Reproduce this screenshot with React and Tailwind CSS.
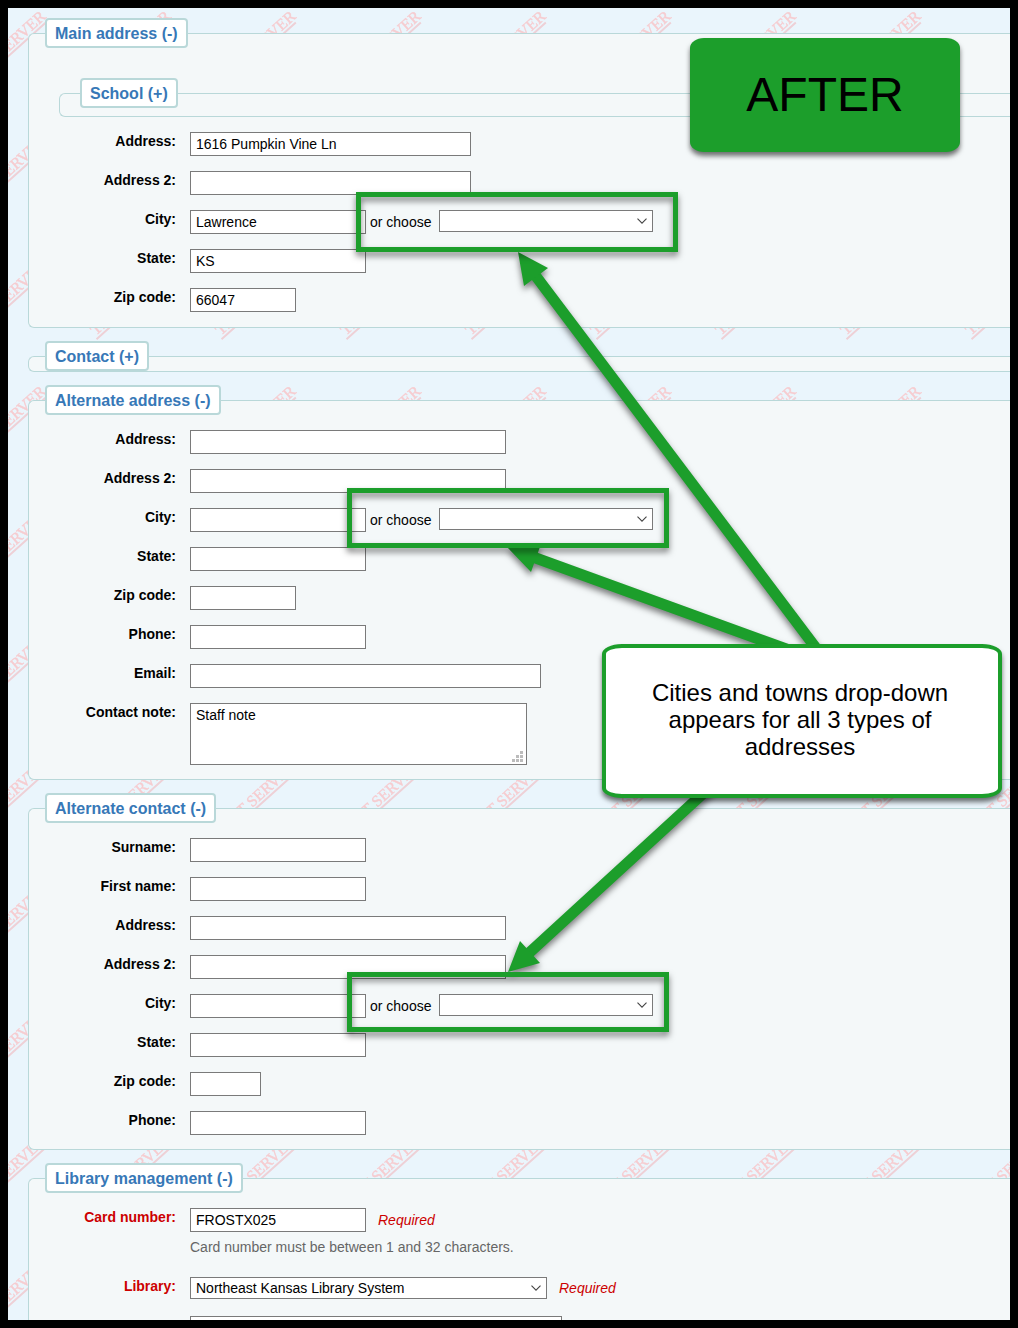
import React from "react";

function Watermark() {
  return (
    <svg aria-hidden="true" className="pointer-events-none absolute inset-0 h-full w-full">
      <defs>
        <pattern id="watermark" x="52" y="-8" width="125" height="125" patternUnits="userSpaceOnUse">
          <g transform="translate(38 88) rotate(-42)">
            <text
              x="0"
              y="-3"
              fontSize="16"
              fill="#f6ccd0"
              stroke="#f6ccd0"
              strokeWidth="0.4"
              style={{ fontFamily: '"Liberation Serif", serif' }}
            >
              TEST SERVER
            </text>
            <path d="M-2 0H98" stroke="#eed0d6" strokeWidth="2" />
          </g>
        </pattern>
      </defs>
      <rect width="100%" height="100%" fill="url(#watermark)" />
    </svg>
  );
}

function Section({ title, className = "", children }) {
  return (
    <fieldset className={"min-w-0 rounded-l-md border border-r-0 border-[#b9d8d9] bg-[#f4f8f9] " + className}>
      <legend className="rounded border-2 border-[#b9d8d9] bg-white">
        <button type="button" className="block h-[26px] px-2 text-base leading-7 font-bold text-[#3778b7]">
          {title}
        </button>
      </legend>
      {children}
    </fieldset>
  );
}

function Row({ id, label, required = false, last = false, children }) {
  return (
    <div className={"flex min-h-6 items-start gap-3.5 " + (last ? "" : "mb-[15px]")}>
      <label
        htmlFor={id}
        className={"w-[131px] shrink-0 text-right leading-[18px] font-bold " + (required ? "text-[#cc0000]" : "text-black")}
      >
        {label}
      </label>
      <div className="min-w-0 flex-1">{children}</div>
    </div>
  );
}

function TextBox({ id, width, value = "" }) {
  return (
    <input
      id={id}
      type="text"
      defaultValue={value}
      className={"block h-6 shrink-0 border border-[#7a7a7a] bg-white px-[5px] text-black " + width}
    />
  );
}

function Dropdown({ id, width, label, options }) {
  return (
    <div className={"relative shrink-0 " + width}>
      <select
        id={id}
        aria-label={label}
        className="block h-[22px] w-full appearance-none border border-[#7a7a7a] bg-white pr-6 pl-[5px] text-black"
      >
        {options.map((o) => (
          <option key={o}>{o}</option>
        ))}
      </select>
      <svg
        aria-hidden="true"
        viewBox="0 0 10 6"
        className="pointer-events-none absolute top-2 right-1.5 h-1.5 w-2.5"
        fill="none"
        stroke="#444"
        strokeWidth="1.1"
      >
        <path d="M0.5 0.7 5 5.2 9.5 0.7" />
      </svg>
    </div>
  );
}

function CityRow({ id, value }) {
  return (
    <Row id={id} label="City:">
      <div className="flex items-start gap-1">
        <TextBox id={id} width="w-44" value={value} />
        <span className="w-[65px] shrink-0 leading-6">or choose</span>
        <Dropdown id={id + "-choice"} width="w-[214px]" label="or choose a city" options={[""]} />
      </div>
    </Row>
  );
}

function FieldRow({ id, label, width, value, last }) {
  return (
    <Row id={id} label={label} last={last}>
      <TextBox id={id} width={width} value={value} />
    </Row>
  );
}

function Highlight({ className }) {
  return (
    <div
      className={
        "absolute h-[60px] w-[322px] border-[5px] border-[#1c9e2b] drop-shadow-[0_4px_3px_rgba(0,0,0,0.5)] " + className
      }
    />
  );
}

function Annotations() {
  return (
    <div className="pointer-events-none absolute top-0 left-0">
      <svg
        aria-hidden="true"
        width="1002"
        height="1312"
        viewBox="8 8 1002 1312"
        className="absolute top-0 left-0 max-w-none drop-shadow-[0_4px_3px_rgba(0,0,0,0.5)]"
        fill="#1c9e2b"
        stroke="none"
      >
        <path d="M535 275 825 660M533 557 800 654M529 953 720 778" stroke="#1c9e2b" strokeWidth="11" />
        <path d="M518 252 548 268 524 286ZM507 547 541 544 531 572ZM508 972 520 941 540 963Z" />
      </svg>
      <Highlight className="top-[184px] left-[348px]" />
      <Highlight className="top-[480px] left-[339px]" />
      <Highlight className="top-[964px] left-[339px]" />
      <div className="absolute top-[30px] left-[682px] flex h-[114px] w-[270px] items-center justify-center rounded-[14px/10px] bg-[#1c9e2b] text-5xl text-black shadow-[0_4px_5px_rgba(0,0,0,0.55)]">
        AFTER
      </div>
      <div className="absolute top-[636px] left-[594px] flex h-[154px] w-[400px] items-center justify-center rounded-[20px/10px] border-4 border-[#1c9e2b] bg-white pr-10 pb-1 pl-9 text-center text-2xl leading-[27px] text-black shadow-[0_4px_5px_rgba(0,0,0,0.55)]">
        Cities and towns drop-down appears for all 3 types of addresses
      </div>
    </div>
  );
}

export default function App() {
  return (
    <div className="relative h-screen overflow-hidden border-8 border-black bg-[#eaf5fc] font-['Liberation_Sans',Arial,sans-serif] text-sm text-black">
      <Watermark />
      <form className="relative flex flex-col gap-[13px] pt-2.5 pl-5">
        <Section title="Main address (-)" className="pb-[15px] pl-4">
          <div className="pt-[30px] pb-[15px] pl-3.5">
            <Section title="School (+)" className="pb-2 pl-5" />
          </div>
          <FieldRow id="address" label="Address:" width="w-[281px]" value="1616 Pumpkin Vine Ln" />
          <FieldRow id="address2" label="Address 2:" width="w-[281px]" />
          <CityRow id="city" value="Lawrence" />
          <FieldRow id="state" label="State:" width="w-44" value="KS" />
          <FieldRow id="zip" label="Zip code:" width="w-[106px]" value="66047" last />
        </Section>

        <Section title="Contact (+)" className="pl-4" />

        <Section title="Alternate address (-)" className="pb-3.5 pl-4">
          <div className="pt-[15px]">
            <FieldRow id="alt-address" label="Address:" width="w-[316px]" />
            <FieldRow id="alt-address2" label="Address 2:" width="w-[316px]" />
            <CityRow id="alt-city" />
            <FieldRow id="alt-state" label="State:" width="w-44" />
            <FieldRow id="alt-zip" label="Zip code:" width="w-[106px]" />
            <FieldRow id="alt-phone" label="Phone:" width="w-44" />
            <FieldRow id="alt-email" label="Email:" width="w-[351px]" />
            <Row id="alt-note" label="Contact note:" last>
              <div className="relative w-[337px]">
                <textarea
                  id="alt-note"
                  defaultValue="Staff note"
                  className="block h-[62px] w-full resize-none border border-[#7a7a7a] bg-white px-[5px] py-0.5 leading-[18px] text-black"
                />
                <svg
                  aria-hidden="true"
                  viewBox="0 0 11 11"
                  className="pointer-events-none absolute right-1 bottom-[3px] h-[11px] w-[11px]"
                  fill="#bcbcbc"
                >
                  <path d="M8 0h3v3h-3zM4 4h3v3h-3zM8 4h3v3h-3zM0 8h3v3h-3zM4 8h3v3h-3zM8 8h3v3h-3z" />
                </svg>
              </div>
            </Row>
          </div>
        </Section>

        <Section title="Alternate contact (-)" className="pb-3.5 pl-4">
          <div className="pt-[15px]">
            <FieldRow id="con-surname" label="Surname:" width="w-44" />
            <FieldRow id="con-first" label="First name:" width="w-44" />
            <FieldRow id="con-address" label="Address:" width="w-[316px]" />
            <FieldRow id="con-address2" label="Address 2:" width="w-[316px]" />
            <CityRow id="con-city" />
            <FieldRow id="con-state" label="State:" width="w-44" />
            <FieldRow id="con-zip" label="Zip code:" width="w-[71px]" />
            <FieldRow id="con-phone" label="Phone:" width="w-44" last />
          </div>
        </Section>

        <Section title="Library management (-)" className="pb-3.5 pl-4">
          <div className="pt-[15px]">
            <Row id="card" label="Card number:" required>
              <div className="flex items-center gap-3">
                <TextBox id="card" width="w-44" value="FROSTX025" />
                <span className="text-[#cc0000] italic">Required</span>
              </div>
              <p className="pt-1.5 pb-1.5 leading-[18px] text-[#666666]">
                Card number must be between 1 and 32 characters.
              </p>
            </Row>
            <Row id="library" label="Library:" required>
              <div className="flex items-center gap-3">
                <Dropdown id="library" width="w-[357px]" options={["Northeast Kansas Library System"]} />
                <span className="text-[#cc0000] italic">Required</span>
              </div>
            </Row>
            <Row id="category" label="Category:" required last>
              <TextBox id="category" width="w-[372px]" />
            </Row>
          </div>
        </Section>
      </form>
      <Annotations />
    </div>
  );
}
